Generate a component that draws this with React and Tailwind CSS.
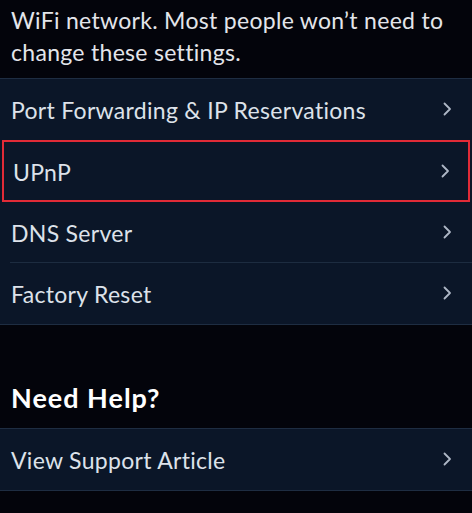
import React from "react";

const Chevron = () => (
  <svg width="10" height="14" viewBox="0 0 10 14" fill="none" className="shrink-0 -mt-[3px]">
    <path d="M2.5 1.5 L8 7 L2.5 12.5" stroke="#aeb7c6" strokeWidth="1.8" strokeLinecap="round" strokeLinejoin="round" />
  </svg>
);

const Row = ({ label, highlight, divider }) => (
  <div
    className={
      highlight
        ? "mx-[2px] h-[62px] flex items-center justify-between pl-[9px] pr-[18px] pt-[2px] border-2 border-[#e12b37]"
        : "h-[61px] flex items-center justify-between pl-[11px] pr-[20px] pt-[2px] relative"
    }
  >
    <span className="text-[23px] text-[#dde2ea] tracking-[0.3px]">{label}</span>
    <Chevron />
    {divider && <div className="absolute left-[10px] right-0 bottom-0 h-px bg-[#1d2c40]" />}
  </div>
);

export default function App() {
  const rows = [
    { label: "Port Forwarding & IP Reservations" },
    { label: "UPnP", highlight: true },
    { label: "DNS Server", divider: true },
    { label: "Factory Reset" },
  ];

  return (
    <div className="w-[472px] h-[513px] overflow-hidden bg-[#03040b] font-['Lato',sans-serif]">
      <p className="px-[11px] pt-[4px] text-[23px] leading-[32px] tracking-[0.3px] text-[#e3e5ea]">
        WiFi network. Most people won’t need to
        <br />
        change these settings.
      </p>
      <div className="mt-[10px] bg-[#0b1628] border-y border-[#1e2d42]">
        {rows.map((r) => (
          <Row key={r.label} {...r} />
        ))}
      </div>
      <h2 className="px-[11px] pt-[56px] pb-[13px] text-[27px] font-bold text-white leading-[34px] tracking-[1px]">
        Need Help?
      </h2>
      <div className="bg-[#0b1628] border-y border-[#1e2d42]">
        <Row label="View Support Article" />
      </div>
    </div>
  );
}
